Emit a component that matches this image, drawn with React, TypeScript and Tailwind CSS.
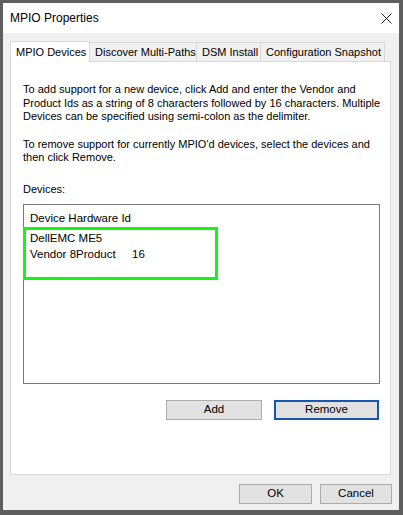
import React from 'react';

const font = { fontFamily: '"Liberation Sans", Arial, sans-serif' };

const Tab = ({ label, width, selected }: { label: string; width: string; selected?: boolean }) => {
    if (selected) {
        return (
            <div className={`${width} h-[21px] bg-white border border-[#d9d9d9] border-b-0 relative z-10 -mb-px flex items-center pl-[5px] text-[11px] leading-none whitespace-nowrap`}>
                {label}
            </div>
        );
    }
    return (
        <div className={`${width} h-[19px] bg-[#f0f0f0] border border-[#d9d9d9] border-b-0 -ml-px flex items-center pl-[5px] pt-[1px] text-[11px] leading-none whitespace-nowrap`}>
            {label}
        </div>
    );
};

const Button = ({ label, width, focused }: { label: string; width: string; focused?: boolean }) => (
    <button
        className={`${width} h-[20px] bg-[#e1e1e1] flex items-center justify-center text-[11.5px] leading-none text-black ${
            focused ? 'border-2 border-[#1658b0]' : 'border border-[#adadad]'
        }`}
    >
        {label}
    </button>
);

export default function App() {
    return (
        <div style={font} className="w-[403px] h-[515px] bg-[#5f5f5f] pt-[3px] pl-[3px] pr-[4px] pb-[5px] text-black">
            <div className="w-full h-full flex flex-col">
                {/* title bar */}
                <div className="h-[30px] bg-white flex items-center justify-between pl-[7px] pr-[6px]">
                    <span className="text-[12px]">MPIO Properties</span>
                    <svg width="11" height="11" viewBox="0 0 11 11" className="mr-[1px]">
                        <path d="M0.5 0.5 L10.5 10.5 M10.5 0.5 L0.5 10.5" stroke="#222" strokeWidth="1" />
                    </svg>
                </div>

                {/* body */}
                <div className="flex-1 bg-[#f0f0f0] pt-[7px] pl-[7px] pr-[8px] flex flex-col">
                    <div className="flex items-end h-[21px]">
                        <Tab label="MPIO Devices" width="w-[80px]" selected />
                        <Tab label="Discover Multi-Paths" width="w-[108px]" />
                        <Tab label="DSM Install" width="w-[65px]" />
                        <Tab label="Configuration Snapshot" width="w-[125px]" />
                    </div>

                    <div className="h-[414px] bg-white border border-[#d9d9d9] pt-[21px] pl-[12px] pr-[10px] text-[11px] leading-[13.5px] flex flex-col">
                        <p className="whitespace-nowrap">
                            To add support for a new device, click Add and enter the Vendor and
                            <br />
                            Product Ids as a string of 8 characters followed by 16 characters. Multiple
                            <br />
                            Devices can be specified using semi-colon as the delimiter.
                        </p>
                        <p className="mt-[14px] whitespace-nowrap">
                            To remove support for currently MPIO'd devices, select the devices and
                            <br />
                            then click Remove.
                        </p>
                        <p className="mt-[18px]">Devices:</p>

                        <div className="relative mt-[8px] h-[180px] border border-[#7a7a7a] pt-[5px] pl-[6px] leading-[16px] text-[11.5px]">
                            <div>Device Hardware Id</div>
                            <div className="mt-[4px]">DellEMC ME5</div>
                            <div className="flex">
                                <span className="w-[102px]">Vendor 8Product</span>
                                <span>16</span>
                            </div>
                            <div className="absolute left-[-1px] top-[22px] w-[195px] h-[53px] border-[3px] border-[#14f514]" />
                        </div>

                        <div className="mt-[16px] flex justify-end gap-[12px] pr-[1px]">
                            <Button label="Add" width="w-[96px]" />
                            <Button label="Remove" width="w-[105px]" focused />
                        </div>
                    </div>

                    <div className="mt-[9px] flex justify-end gap-[8px] -mr-[1px]">
                        <Button label="OK" width="w-[73px]" />
                        <Button label="Cancel" width="w-[72px]" />
                    </div>
                </div>
            </div>
        </div>
    );
}
